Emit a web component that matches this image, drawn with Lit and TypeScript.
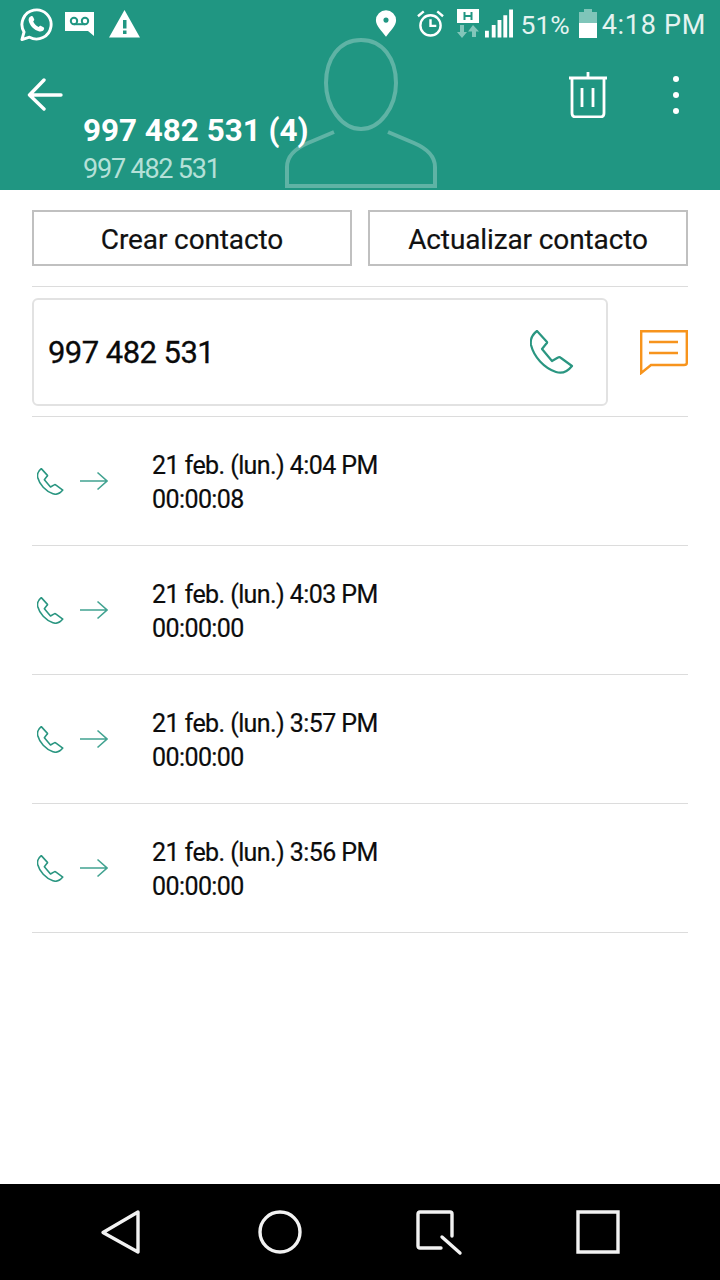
import { LitElement, html, css } from "lit";
import { customElement } from "lit/decorators.js";

const phonePath = "M7 1 L17 12 Q17.5 13 16 14 L12 19 L22 31 L28 27.5 Q29.5 26.5 31 28 L42 36 C38 41 32 44 26 42 C14 38 4 27 1 15 C0 9 3 4 7 1 Z";

const phone = (cls: string, sw: number) => html`<svg class=${cls} viewBox="0 0 44 44" fill="none" stroke="#2a9681" stroke-width=${sw} stroke-linejoin="round"><path d=${phonePath}></path></svg>`;

const calls = [
  ["21 feb. (lun.) 4:04 PM", "00:00:08"],
  ["21 feb. (lun.) 4:03 PM", "00:00:00"],
  ["21 feb. (lun.) 3:57 PM", "00:00:00"],
  ["21 feb. (lun.) 3:56 PM", "00:00:00"],
];

@customElement("app-root")
export class AppRoot extends LitElement {
  static styles = css`
    :host { display: block; width: 720px; height: 1280px; font-family: Roboto, "Liberation Sans", sans-serif; background: #fff; color: #000; }
    .page { display: flex; flex-direction: column; height: 1280px; }
    .header { position: relative; height: 190px; background: #209682; color: #fff; flex: none; overflow: hidden; }
    .status { display: flex; justify-content: space-between; align-items: flex-start; height: 48px; padding: 7px 14px 0 19px; box-sizing: border-box; }
    .status-left, .status-right { display: flex; align-items: flex-start; }
    .status-left { gap: 12px; }
    .warn { margin-left: 3px; margin-top: 3px; }
    .vm { margin-top: 5px; }
    .status-right { padding-top: 2px; }
    .pct, .time { font-size: 27px; line-height: 32px; color: #e4f3f0; white-space: nowrap; }
    .pct { font-size: 26.5px; margin: 0 9px 0 8px; }
    .time { letter-spacing: 0.7px; margin-left: 5px; }
    .alarm { margin-left: 20px; }
    .hsdpa { margin-left: 13px; }
    .bars { margin-left: 6px; }
    .silhouette { position: absolute; left: 284px; top: 37px; width: 154px; height: 153px; }
    .head-main { display: flex; justify-content: space-between; padding: 0 40px 0 27px; }
    .back { width: 36px; height: 34px; margin-top: 30px; }
    .tools { display: flex; align-items: flex-start; gap: 65px; margin-top: 24px; }
    .trash { width: 38px; height: 46px; }
    .dots { width: 8px; height: 40px; margin-top: 3px; }
    .titles { position: absolute; left: 83px; top: 112px; }
    .title { font-size: 31.4px; line-height: 38px; font-weight: 700; white-space: nowrap; }
    .sub { font-size: 27px; line-height: 38px; color: #b5e0d8; letter-spacing: -1.2px; white-space: nowrap; }
    .content { flex: 1; padding: 20px 32px 0; }
    .buttons { display: flex; gap: 16px; padding-bottom: 20px; border-bottom: 1px solid #dcdcdc; }
    .btn { flex: 1; height: 56px; box-sizing: border-box; border: 2px solid #c0c0c0; padding-top: 3px; display: flex; align-items: center; justify-content: center; font-size: 28px; letter-spacing: -0.12px; -webkit-text-stroke: 0.2px #111; color: #111; }
    .contact { display: flex; align-items: center; gap: 32px; padding: 11px 0 10px; border-bottom: 1px solid #dcdcdc; }
    .card { flex: none; width: 576px; height: 108px; box-sizing: border-box; border: 2px solid #e2e2e2; border-radius: 6px; display: flex; align-items: center; justify-content: space-between; padding: 0 32px 0 14px; font-size: 31px; font-weight: 400; letter-spacing: -0.55px; -webkit-text-stroke: 0.3px #0a0a0a; color: #0a0a0a; }
    .card-phone { width: 44px; height: 44px; }
    .msg { flex: none; width: 48px; height: 45px; }
    .row { display: flex; align-items: center; height: 129px; box-sizing: border-box; border-bottom: 1px solid #dcdcdc; }
    .row-phone { flex: none; width: 27px; height: 27px; margin-left: 5px; }
    .arrow { flex: none; width: 28px; height: 20px; margin-left: 16px; }
    .info { margin-left: 44px; margin-top: 4px; font-size: 25px; line-height: 34px; letter-spacing: -0.58px; -webkit-text-stroke: 0.2px #0c0c0c; color: #0c0c0c; }
    .nav { flex: none; height: 96px; background: #000; display: flex; align-items: center; padding-left: 101px; }
    .nav svg { width: 40px; height: 44px; flex: none; overflow: visible; }
    .nav .b2 { margin-left: 117px; width: 44px; }
    .nav .b3 { margin-left: 114px; width: 46px; }
    .nav .b4 { margin-left: 114px; width: 44px; }
  `;

  render() {
    return html`
      <div class="page">
        <div class="header">
          <svg class="silhouette" viewBox="0 0 154 153" fill="none" stroke="#5fb3a5" stroke-width="4">
            <path d="M77 3 C55 3 42 22 42 46 C42 70 58 92 77 92 C96 92 112 70 112 46 C112 22 99 3 77 3 Z"></path>
            <path d="M50 95 L24 106 C10 112 3 120 3 130 L3 149 L151 149 L151 130 C151 120 144 112 130 106 L104 95"></path>
          </svg>
          <div class="status">
            <div class="status-left">
              <svg width="34" height="35" viewBox="0 0 35 35" fill="none"><path d="M3 33 L5.2 25.2 A15 15 0 1 1 10.8 30.6 Z" stroke="#fff" stroke-width="3" stroke-linejoin="round"></path><path fill="#fff" d="M12.3 9 C13.2 8.5 14 8.7 14.4 9.5 L15.6 12 C15.9 12.7 15.6 13.2 14.6 14.4 C15.8 17 17.6 18.8 20.2 20.1 C21.4 18.8 22 18.6 22.7 19 L25.2 20.3 C26 20.8 26 21.6 25.6 22.7 C24.8 24.5 22.8 25 21 24.6 C15.6 23.4 11 18.6 10 13.6 C9.6 11.8 10.4 9.8 12.3 9 Z"></path></svg>
              <svg class="vm" width="29" height="24" viewBox="0 0 29 24"><path fill="#fff" d="M0 0 H29 V24 L23 19 H0 Z"></path><g fill="none" stroke="#209682" stroke-width="2"><circle cx="9" cy="9" r="3.2"></circle><circle cx="20" cy="9" r="3.2"></circle><path d="M9 12.2 H20"></path></g></svg>
              <svg class="warn" width="31" height="28" viewBox="0 0 31 28"><path fill="#fff" d="M15.5 0 L31 27.5 H0 Z"></path><path fill="#209682" d="M14 10 H17.5 V18.5 H14 Z M14 20.5 H17.5 V24 H14 Z"></path></svg>
            </div>
            <div class="status-right">
              <svg width="22" height="29" viewBox="0 0 24 29"><path fill="#fff" fill-rule="evenodd" d="M12 29 C7 22 1 17 1 11 A11 11 0 0 1 23 11 C23 17 17 22 12 29 Z M12 8 A2.8 2.8 0 1 0 12 13.6 A2.8 2.8 0 1 0 12 8 Z"></path></svg>
              <svg class="alarm" width="27" height="29" viewBox="0 0 28 29" fill="none" stroke="#fff" stroke-width="2.5"><circle cx="14" cy="16.5" r="10.5"></circle><path d="M14 10 V17 H20 M1 7 L7 2 M27 7 L21 2"></path></svg>
              <svg class="hsdpa" width="22" height="29" viewBox="0 0 22 29"><path fill="#fff" d="M0 0 H22 V14 H0 Z"></path><path stroke="#209682" stroke-width="2" fill="none" d="M7.5 3 V11 M14.5 3 V11 M7.5 7 H14.5"></path><path fill="#83c6ba" d="M3 16 H7 V23 H10 L5 29 L0 23 H3 Z M16 16 L22 22.5 H19 V28 H15 V22.5 H11 Z"></path></svg>
              <svg class="bars" width="28" height="29" viewBox="0 0 29 29"><path fill="#fff" d="M0 22 H4 V29 H0 Z M7 16 H11 V29 H7 Z M13 11 H17 V29 H13 Z M19 6 H23 V29 H19 Z M25 0 H29 V29 H25 Z"></path></svg>
              <span class="pct">51%</span>
              <svg width="18" height="29" viewBox="0 0 18 29"><path fill="#7fc5b9" d="M5 0 H13 V3 H18 V14 H0 V3 H5 Z"></path><path fill="#fff" d="M0 14 H18 V29 H0 Z"></path></svg>
              <span class="time">4:18 PM</span>
            </div>
          </div>
          <div class="head-main">
            <svg class="back" viewBox="0 0 36 34" fill="none" stroke="#fff" stroke-width="3.4" stroke-linecap="round" stroke-linejoin="round"><path d="M34 17 H3 M17 2 L2.5 17 L17 31"></path></svg>
            <div class="tools">
              <svg class="trash" viewBox="0 0 38 46" fill="none" stroke="#fff" stroke-width="2.8"><path d="M0 6 H38 M19 0 V6 M3 6 V41 Q3 45 7 45 H31 Q35 45 35 41 V6 M13 16 V35 M24 16 V35"></path></svg>
              <svg class="dots" viewBox="0 0 8 40" fill="#fff"><circle cx="4" cy="4" r="3"></circle><circle cx="4" cy="20" r="3"></circle><circle cx="4" cy="36" r="3"></circle></svg>
            </div>
          </div>
          <div class="titles">
            <div class="title">997 482 531 (4)</div>
            <div class="sub">997 482 531</div>
          </div>
        </div>
        <div class="content">
          <div class="buttons">
            <div class="btn">Crear contacto</div>
            <div class="btn">Actualizar contacto</div>
          </div>
          <div class="contact">
            <div class="card">
              <span>997 482 531</span>
              ${phone("card-phone", 2.2)}
            </div>
            <svg class="msg" viewBox="0 0 48 45" fill="none" stroke="#f7941d" stroke-width="2.4"><path d="M1.2 1.2 H46.8 V33 Q46.8 35 44 35 H11 L1.2 43 Z M9 12 H38 M9 23 H38"></path></svg>
          </div>
          ${calls.map(([date, dur]) => html`
            <div class="row">
              ${phone("row-phone", 2.6)}
              <svg class="arrow" viewBox="0 0 28 20" fill="none" stroke="#42a391" stroke-width="1.6"><path d="M0 10 H27 M17.5 1.5 L27 10 L17.5 18.5"></path></svg>
              <div class="info"><div>${date}</div><div>${dur}</div></div>
            </div>
          `)}
        </div>
        <div class="nav">
          <svg viewBox="0 0 40 44" fill="none" stroke="#f2f2f2" stroke-width="3.4" stroke-linejoin="round"><path d="M37 2 L2 22.5 L37 42 Z"></path></svg>
          <svg class="b2" viewBox="0 0 44 44" fill="none" stroke="#f2f2f2" stroke-width="3.4"><circle cx="22" cy="22" r="20"></circle></svg>
          <svg class="b3" viewBox="0 0 46 44" fill="none" stroke="#f2f2f2" stroke-width="3.4" stroke-linecap="round" stroke-linejoin="round"><path d="M25 38 H4 Q2 38 2 36 V4 Q2 2 4 2 H34 Q36 2 36 4 V26 M26 27 L44 43"></path></svg>
          <svg class="b4" viewBox="0 0 44 44" fill="none" stroke="#f2f2f2" stroke-width="3.4"><path d="M2 2 H42 V42 H2 Z"></path></svg>
        </div>
      </div>
    `;
  }
}
